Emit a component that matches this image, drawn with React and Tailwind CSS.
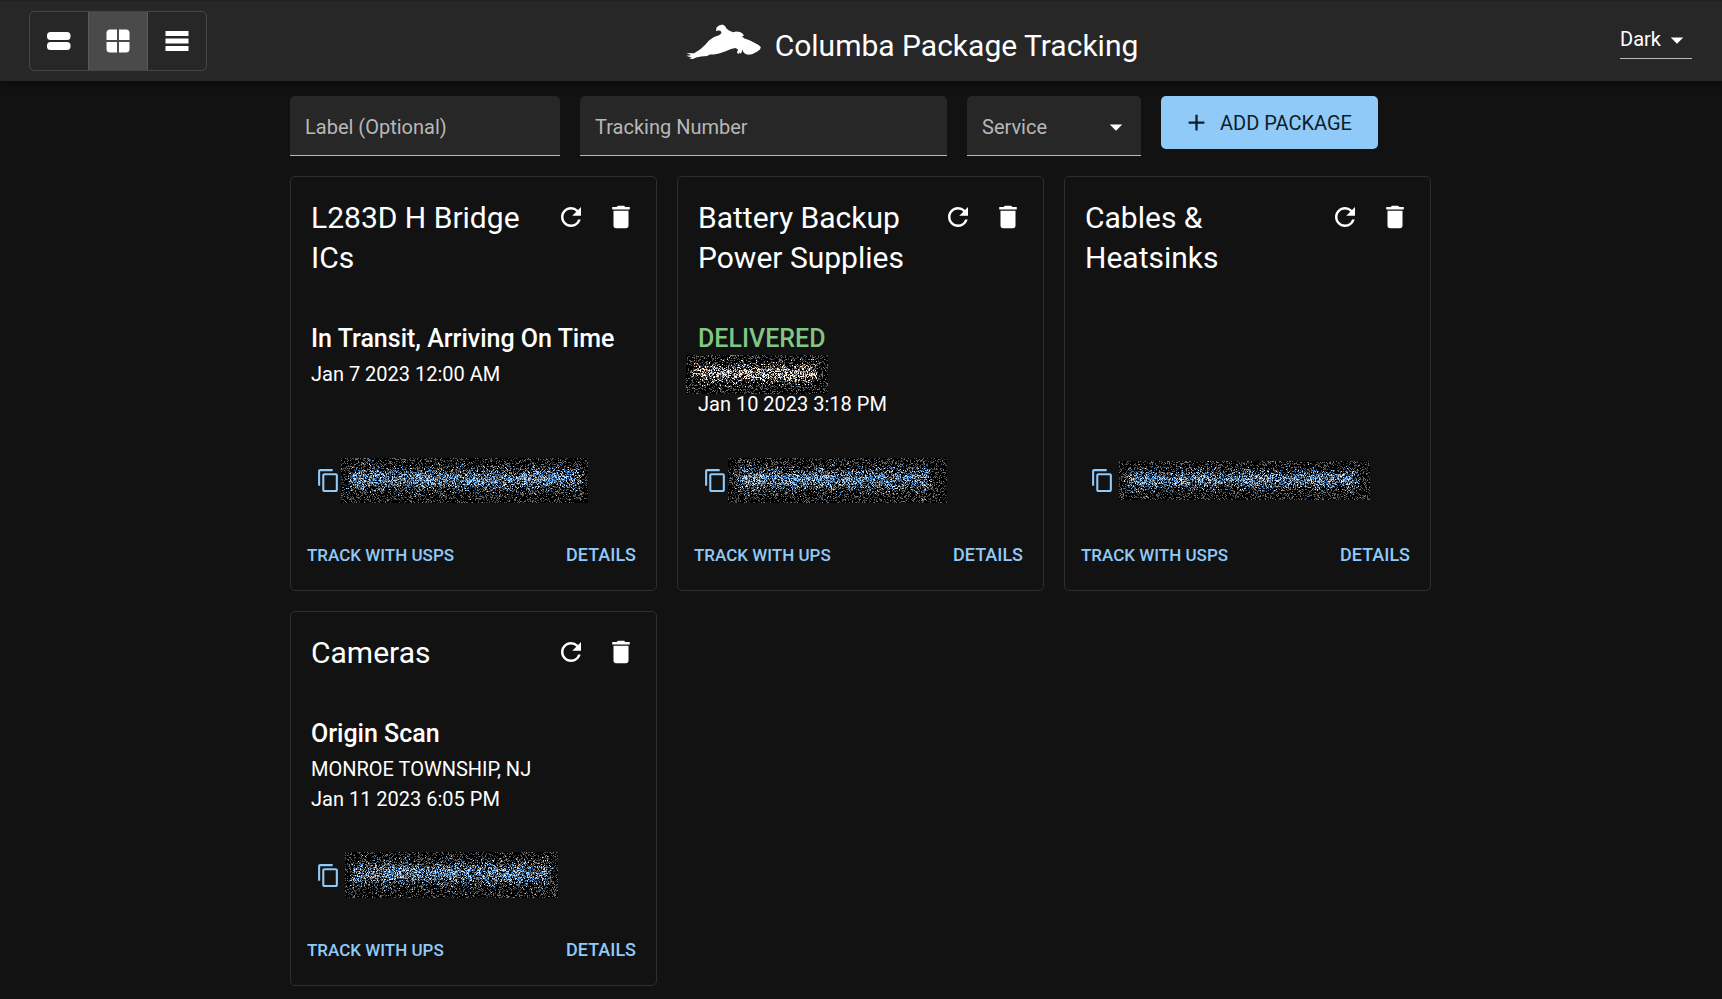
import { MdAdd, MdArrowDropDown, MdContentCopy, MdDelete, MdRefresh } from "react-icons/md";

const BLUE_INK = ["#90caf9", "#5fa8ea", "#2f6cb0", "#d4ecff", "#3a8ee8", "#b4dcff"];
const WHITE_INK = ["#ffffff", "#f0dcc0", "#c89068", "#9ab4e0", "#fff6e0", "#ffffff"];
const DUST = ["#333333", "#4c4c4c", "#6a6662", "#444a54", "#7c7c7c"];

function speckle(width, height, seed, ink, end) {
  let state = seed * 7919;
  const random = () => {
    state = (state * 1664525 + 1013904223) % 4294967296;
    return state / 4294967296;
  };
  const paths = {};
  for (let y = 0; y < height; y++) {
    for (let x = 0; x < width; x++) {
      const distance = (y - height * 0.46) / (height * 0.2);
      const edge = Math.min(1, Math.max(0, (x - 4) / 8), Math.max(0, (width - end - x + 4) / 8));
      const strength = edge * Math.exp(-distance * distance);
      const word = 0.86 + 0.08 * Math.sin(x * 0.11 + seed) + 0.06 * Math.sin(x * 0.37 + seed * 2);
      const roll = random();
      let color = null;
      if (roll < strength * 0.54 * word) color = ink[Math.floor(random() * ink.length)];
      else if (roll > 0.71) color = DUST[Math.floor(random() * DUST.length)];
      if (color) paths[color] = (paths[color] || "") + `M${x} ${y}h1v1h-1z`;
    }
  }
  return Object.entries(paths);
}

function Redacted({ width, height, seed, ink = BLUE_INK, end = 8, className = "" }) {
  return (
    <svg
      width={width}
      height={height}
      shapeRendering="crispEdges"
      aria-hidden="true"
      className={`shrink-0 bg-black ${className}`}
    >
      {speckle(width, height, seed, ink, end).map(([color, d]) => (
        <path key={color} d={d} fill={color} />
      ))}
    </svg>
  );
}

const VIEWS = [
  {
    name: "Large cards",
    icon: (
      <>
        <rect x="3" y="6" width="23.500" height="8" rx="3.5" />
        <rect x="3" y="16" width="23.500" height="8" rx="3.5" />
      </>
    ),
  },
  {
    name: "Grid",
    active: true,
    icon: (
      <>
        <path d="M14 3.500V14H3.500V7a3.500 3.500 0 0 1 3.500-3.500z" />
        <path d="M16 3.500V14H26.500V7a3.500 3.500 0 0 0-3.500-3.500z" />
        <path d="M14 26.500V16H3.500V23a3.500 3.500 0 0 0 3.500 3.500z" />
        <path d="M16 26.500V16H26.500V23a3.500 3.500 0 0 1-3.500 3.500z" />
      </>
    ),
  },
  {
    name: "List",
    icon: <path d="M3.500 5h23v5h-23zM3.500 12.500h23v5h-23zM3.500 20h23v5h-23z" />,
  },
];

function Logo() {
  return (
    <svg width="90" height="46" viewBox="0 0 90 46" fill="#fff" aria-hidden="true">
      <path d="M5 35L13 35.200L19 31.500L24 27L28 22.500L33 19L38.500 17L40.500 15L39.500 12.800L37.500 12.500L35 13L35.500 9.500L38 7.500L41.500 6.500L44 8L45.500 10.500L48 12.500L52 14.300L55 13.600L59 14L61.500 15.500L63 17.500L61 18.500L63.500 20.500L68 22L73 24.500L78 27.300L79.800 29.200L79 31.500L75.500 34L71 36.300L67 36.800L64 35.800L62 33.500L61.300 31L60.800 34L59.500 35.800L58.700 34.500L57.500 36L56 34.800L57 31.500L54.500 30L50 31L44 33.500L38 35.500L33 36.500L29 36.500L26 38L20 38.500L15 39.500L12 41L8 40.500L11 39.300L6 38.800L10 37.800L5 37.200L10 36.400z" />
    </svg>
  );
}

const PACKAGES = [
  {
    title: "L283D H Bridge ICs",
    status: "In Transit, Arriving On Time",
    date: "Jan 7 2023 12:00 AM",
    service: "USPS",
    code: { width: 247, height: 45, seed: 11 },
  },
  {
    title: "Battery Backup Power Supplies",
    status: "DELIVERED",
    delivered: true,
    hiddenPlace: true,
    date: "Jan 10 2023 3:18 PM",
    service: "UPS",
    code: { width: 219, height: 45, seed: 23, end: 18 },
  },
  {
    title: "Cables & Heatsinks",
    service: "USPS",
    code: { width: 251, height: 39, seed: 37, end: 14, className: "ml-1" },
  },
  {
    title: "Cameras",
    status: "Origin Scan",
    place: "MONROE TOWNSHIP, NJ",
    date: "Jan 11 2023 6:05 PM",
    service: "UPS",
    code: { width: 213, height: 46, seed: 53, className: "ml-1" },
  },
];

function PackageCard({ item }) {
  return (
    <article className="flex flex-col rounded-[5px] border border-[#2e2e2e]">
      <div className="flex items-start pt-[21px] pr-2.5 pl-5">
        <h2 className="min-w-0 flex-1 text-[30px] leading-10">{item.title}</h2>
        <div className="-mt-1.5 -mb-1 flex shrink-0">
          <button type="button" aria-label="Refresh" className="p-2.5">
            <MdRefresh size={30} />
          </button>
          <button type="button" aria-label="Delete" className="p-2.5">
            <MdDelete size={30} />
          </button>
        </div>
      </div>

      <div className="px-5 pt-[41px] text-xl leading-7.5">
        {item.status && (
          <h3
            className={`text-[25px] leading-10 font-medium ${item.delivered ? "text-[#81c784]" : ""}`}
          >
            {item.status}
          </h3>
        )}
        {item.place && <p>{item.place}</p>}
        {item.hiddenPlace && (
          <div className="relative h-7.5">
            <Redacted
              width={142}
              height={39}
              seed={71}
              ink={WHITE_INK}
              end={12}
              className="absolute -top-1 -left-3"
            />
          </div>
        )}
        {item.date && <p>{item.date}</p>}
      </div>

      <div className="mt-auto px-5 pt-9 pb-[25px]">
        <button type="button" aria-label="Copy tracking number" className="flex h-[50px] items-center pl-[5px] text-[#90caf9]">
          <MdContentCopy size={25} className="shrink-0" />
          <Redacted {...item.code} />
        </button>
      </div>

      <div className="flex items-center justify-between px-2.5 pb-2.5 font-medium text-[#90caf9]">
        <a href="#track" className="px-1.5 text-[17px] leading-[50px]">
          TRACK WITH {item.service}
        </a>
        <button type="button" className="px-2.5 text-lg leading-[50px]">
          DETAILS
        </button>
      </div>
    </article>
  );
}

const FIELD =
  "h-[60px] rounded-t-[5px] border-b border-[#b8b8b8] bg-[#272727] px-[15px] pt-0.5 text-xl placeholder:text-[#b8b8b8] placeholder:opacity-100 outline-none";

export default function App() {
  return (
    <div className="min-h-screen bg-[#121212] font-[Roboto,sans-serif] text-white">
      <header className="relative flex h-[81px] items-center justify-between border-t border-[#202124] bg-[#272727] pr-[30px] pl-[29px] shadow-[0_2px_8px_rgba(0,0,0,0.5)]">
        <div className="flex h-[60px] overflow-hidden rounded-[5px] border border-[#474747]">
          {VIEWS.map((view, index) => (
            <button
              key={view.name}
              type="button"
              aria-label={view.name}
              aria-pressed={Boolean(view.active)}
              className={`flex items-center justify-center ${view.active ? "bg-[#4a4a4a]" : ""} ${index > 0 ? "w-[59px] border-l border-[#5a5a5a]" : "w-[58px]"}`}
            >
              <svg width="30" height="30" viewBox="0 0 30 30" fill="#fff">
                {view.icon}
              </svg>
            </button>
          ))}
        </div>

        <div className="flex items-center gap-1 pr-2">
          <Logo />
          <h1 className="pt-2.5 text-[30px] leading-10">Columba Package Tracking</h1>
        </div>

        <div className="relative">
          <select
            aria-label="Theme"
            defaultValue="Dark"
            className="h-9 w-[72px] appearance-none border-b border-[#b8b8b8] bg-transparent pb-1 text-xl outline-none"
          >
            <option>Dark</option>
            <option>Light</option>
          </select>
          <MdArrowDropDown size={30} className="pointer-events-none absolute top-0.5 right-0" />
        </div>
      </header>

      <main className="mx-auto max-w-[1142px] pt-[15px] pr-px pb-3">
        <form className="flex flex-wrap items-start gap-5">
          <input aria-label="Label (Optional)" placeholder="Label (Optional)" className={`w-[270px] ${FIELD}`} />
          <input aria-label="Tracking Number" placeholder="Tracking Number" className={`w-[367px] ${FIELD}`} />
          <div className="relative">
            <select
              aria-label="Service"
              defaultValue="Service"
              className={`w-[174px] appearance-none text-[#b8b8b8] ${FIELD}`}
            >
              <option>Service</option>
              <option>UPS</option>
              <option>USPS</option>
            </select>
            <MdArrowDropDown size={30} className="pointer-events-none absolute top-4 right-2.5" />
          </div>
          <button
            type="button"
            className="flex h-[53px] w-[217px] items-center justify-center gap-2.5 rounded-[5px] bg-[#90caf9] pr-1 text-xl text-[#0f1c28]"
          >
            <MdAdd size={27} />
            ADD PACKAGE
          </button>
        </form>

        <div className="mt-5 grid grid-cols-3 items-stretch gap-5">
          {PACKAGES.map((item) => (
            <PackageCard key={item.title} item={item} />
          ))}
        </div>
      </main>
    </div>
  );
}
